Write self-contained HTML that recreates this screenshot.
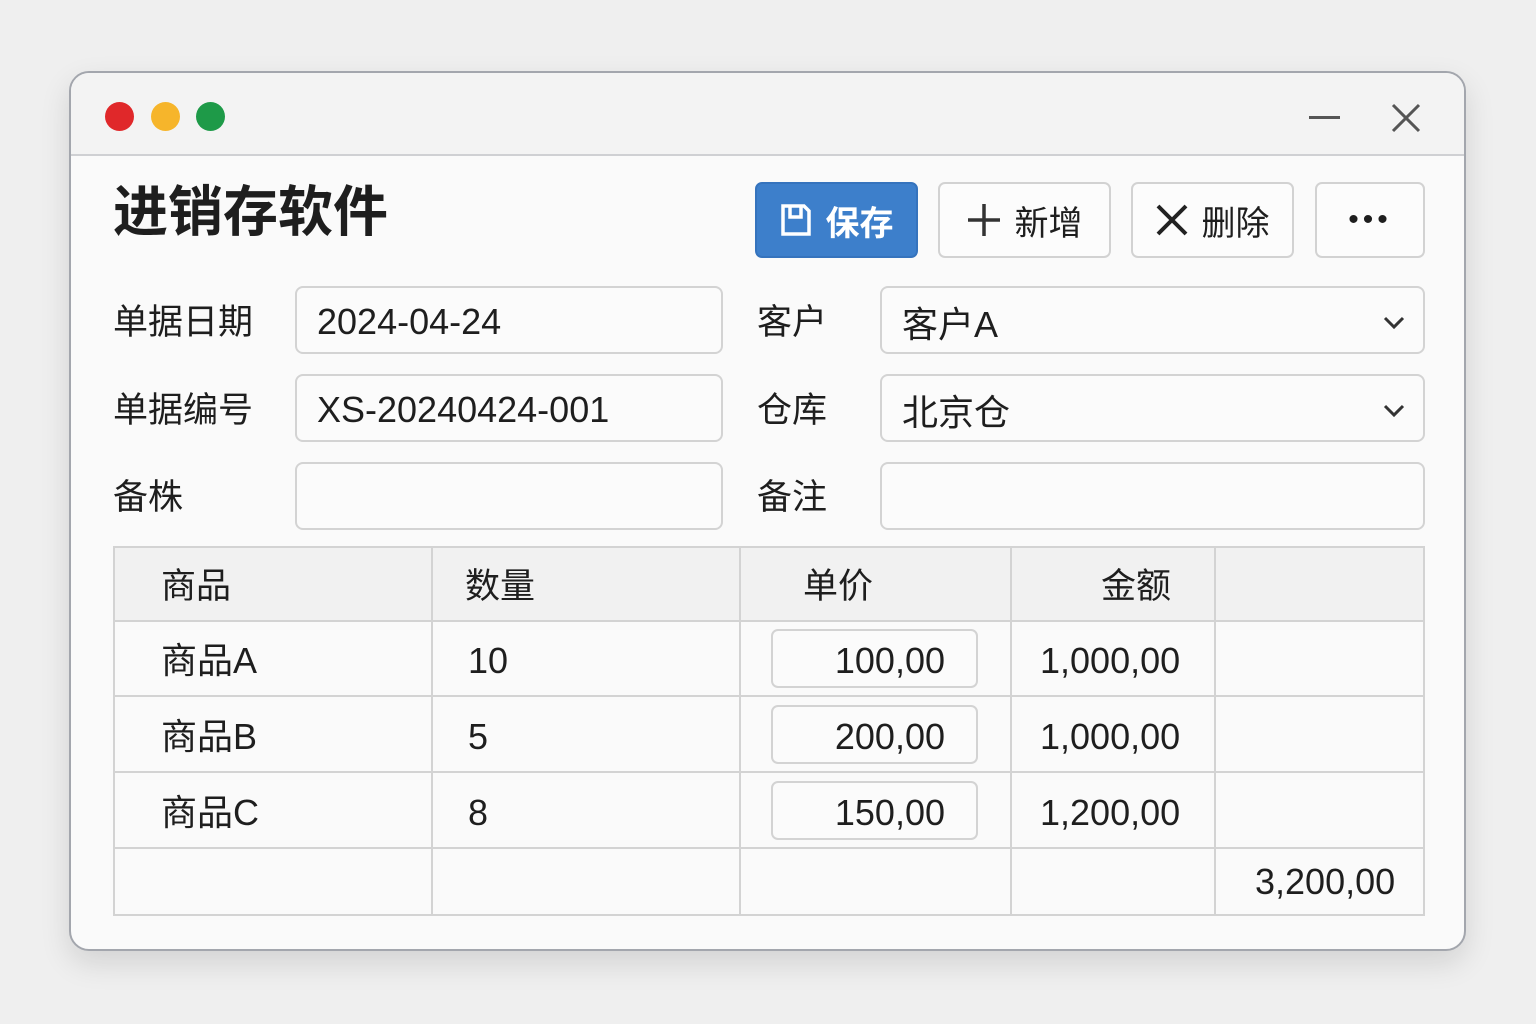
<!DOCTYPE html>
<html><head><meta charset="utf-8"><style>
*{box-sizing:border-box;margin:0;padding:0}
body{width:1536px;height:1024px;background:#efefef;font-family:"Liberation Sans","Noto Sans CJK SC",sans-serif;color:#1e1e1e;position:relative;overflow:hidden}
.win{position:absolute;left:69px;top:71px;width:1397px;height:880px;border:2px solid #a3a6ad;border-radius:20px;background:#fafafa;overflow:hidden;box-shadow:0 12px 30px rgba(0,0,0,.12)}
.tb{position:absolute;left:0;top:0;width:100%;height:83px;background:#f3f3f3;border-bottom:2px solid #cfd0d3}
.dot{position:absolute;top:29px;width:29px;height:29px;border-radius:50%}
.a{position:absolute}
.t{position:absolute;font-size:35px;line-height:1;white-space:nowrap}
.btn{position:absolute;top:109px;height:76px;border:2px solid #d2d2d2;border-radius:7px;background:#fcfcfc;font-size:34px;display:flex;align-items:center;justify-content:center;gap:14px}
.in{position:absolute;height:68px;border:2px solid #d3d3d3;border-radius:8px;background:#fbfbfb;font-size:36px;padding-left:20px;padding-top:4px;display:flex;align-items:center}
.tbl{position:absolute;left:42px;top:473px;width:1312px;height:370px;border:2px solid #d3d3d3}
.hl{position:absolute;left:0;width:100%;height:2px;background:#d3d3d3}
.vl{position:absolute;top:0;height:100%;width:2px;background:#d3d3d3}
.pin{position:absolute;left:656px;width:207px;height:59px;border:2px solid #d3d3d3;border-radius:7px;background:#fbfbfb;font-size:36px;text-align:right;padding-right:31px;line-height:59px}
</style></head><body>
<div class="win">
<div class="tb">
<div class="dot" style="left:34px;background:#e0282a"></div>
<div class="dot" style="left:80px;background:#f6b52b"></div>
<div class="dot" style="left:125px;background:#1e9a48"></div>
<div class="a" style="left:1238px;top:43px;width:31px;height:3px;background:#555"></div>
<svg class="a" style="left:1320px;top:30px" width="30" height="30"><path d="M2 2L28 28M28 2L2 28" stroke="#555" stroke-width="3"/></svg>
</div>
<div class="t" style="left:42px;top:112px;font-size:55px;font-weight:bold">进销存软件</div>
<div class="btn" style="left:684px;width:163px;background:#3d7fcb;border-color:#3573bd;color:#fff;font-weight:bold">
<svg width="32" height="34"><path d="M3 3H24L29 8V31H3Z M10 3V14H21V3" fill="none" stroke="#fff" stroke-width="3.5"/></svg>保存</div>
<div class="btn" style="left:867px;width:173px"><svg width="34" height="34"><path d="M17 1V33M1 17H33" stroke="#333" stroke-width="3.5"/></svg>新增</div>
<div class="btn" style="left:1060px;width:163px"><svg width="32" height="32"><path d="M2 2L30 30M30 2L2 30" stroke="#222" stroke-width="4"/></svg>删除</div>
<div class="btn" style="left:1244px;width:110px;font-size:30px;letter-spacing:4px">•••</div>

<div class="t" style="left:42px;top:232px">单据日期</div>
<div class="t" style="left:42px;top:320px">单据编号</div>
<div class="t" style="left:42px;top:407px">备株</div>
<div class="t" style="left:686px;top:232px">客户</div>
<div class="t" style="left:686px;top:320px">仓库</div>
<div class="t" style="left:686px;top:407px">备注</div>
<div class="in" style="left:224px;top:213px;width:428px">2024-04-24</div>
<div class="in" style="left:224px;top:301px;width:428px">XS-20240424-001</div>
<div class="in" style="left:224px;top:389px;width:428px"></div>
<div class="in" style="left:809px;top:213px;width:545px">客户A<svg class="a" style="right:18px;top:28px" width="22" height="14"><path d="M2 2L11 11L20 2" fill="none" stroke="#333" stroke-width="3"/></svg></div>
<div class="in" style="left:809px;top:301px;width:545px">北京仓<svg class="a" style="right:18px;top:28px" width="22" height="14"><path d="M2 2L11 11L20 2" fill="none" stroke="#333" stroke-width="3"/></svg></div>
<div class="in" style="left:809px;top:389px;width:545px"></div>

<div class="tbl">
<div class="a" style="left:0;top:0;width:100%;height:72px;background:#f1f1f1"></div>
<div class="hl" style="top:72px"></div><div class="hl" style="top:147px"></div><div class="hl" style="top:223px"></div><div class="hl" style="top:299px"></div>
<div class="vl" style="left:316px"></div><div class="vl" style="left:624px"></div><div class="vl" style="left:895px"></div><div class="vl" style="left:1099px"></div>
<div class="t" style="left:46px;top:21px">商品</div>
<div class="t" style="left:350px;top:21px">数量</div>
<div class="t" style="left:688px;top:21px">单价</div>
<div class="t" style="left:986px;top:21px">金额</div>
<div class="t" style="left:46px;top:95px;font-size:36px">商品A</div>
<div class="t" style="left:46px;top:171px;font-size:36px">商品B</div>
<div class="t" style="left:46px;top:247px;font-size:36px">商品C</div>
<div class="t" style="left:353px;top:95px;font-size:36px">10</div>
<div class="t" style="left:353px;top:171px;font-size:36px">5</div>
<div class="t" style="left:353px;top:247px;font-size:36px">8</div>
<div class="pin" style="top:81px">100,00</div>
<div class="pin" style="top:157px">200,00</div>
<div class="pin" style="top:233px">150,00</div>
<div class="t" style="left:925px;top:95px;font-size:36px">1,000,00</div>
<div class="t" style="left:925px;top:171px;font-size:36px">1,000,00</div>
<div class="t" style="left:925px;top:247px;font-size:36px">1,200,00</div>
<div class="t" style="left:1140px;top:316px;font-size:36px">3,200,00</div>
</div>
</div>
</body></html>
